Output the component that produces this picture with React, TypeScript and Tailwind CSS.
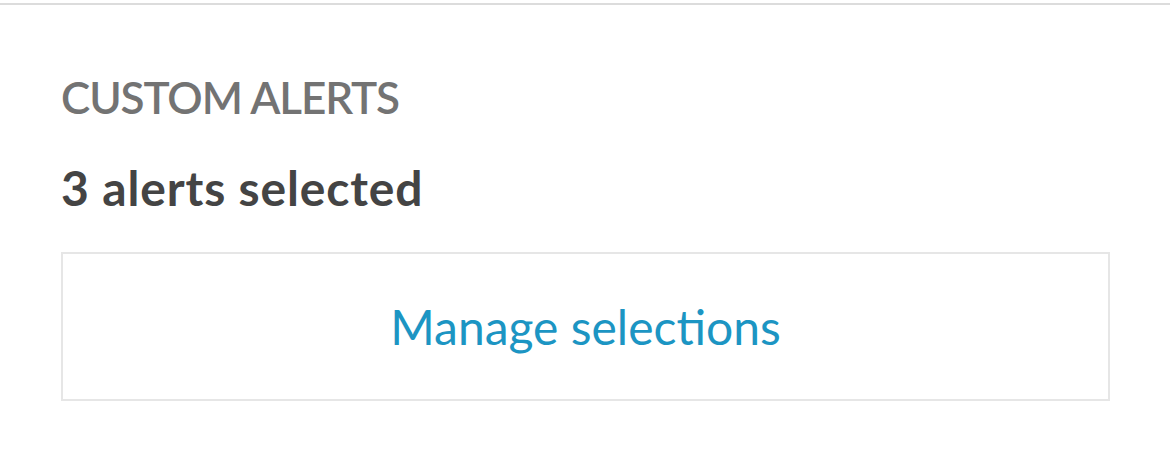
import React from "react";

export default function App() {
  return (
    <div className="w-[1170px] h-[465px] bg-white" style={{ fontFamily: "Lato, 'Open Sans', sans-serif" }}>
      <div className="h-[3px] bg-white" />
      <div className="h-[2px] bg-[#dcdcdc]" />
      <div className="pl-[61px] pr-[60px] pt-[66px]">
        <div className="text-[44px] leading-[52px] font-semibold tracking-[-1.1px] text-[#737373]">CUSTOM ALERTS</div>
        <div className="mt-[37px] text-[48px] leading-[56px] font-bold tracking-[0.85px] text-[#444444]">3 alerts selected</div>
        <div className="mt-[36px] h-[149px] border-2 border-[#e6e6e6] flex items-center justify-center">
          <span className="text-[48px] text-[#1c95c3]">Manage selections</span>
        </div>
      </div>
    </div>
  );
}
